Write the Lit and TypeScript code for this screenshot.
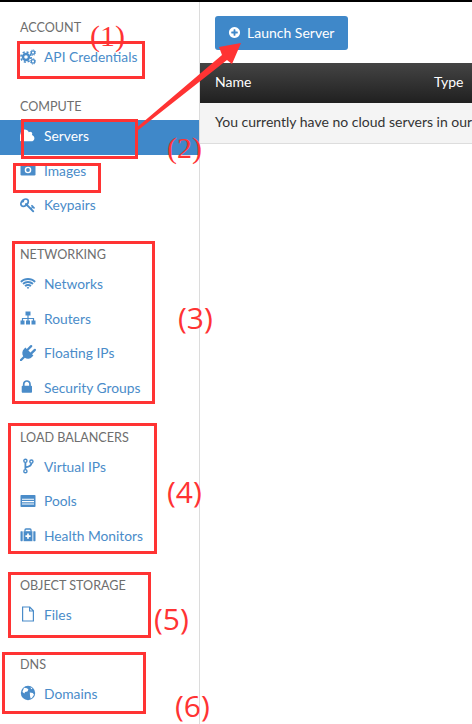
import { LitElement, html, css, svg } from "lit";
import { customElement } from "lit/decorators.js";

const I: Record<string, any> = {
  gears: svg`<svg viewBox="0 0 16 16"><circle cx="6" cy="8" r="3" fill="none" stroke="currentColor" stroke-width="2.400"/><circle cx="6" cy="8" r="5.100" fill="none" stroke="currentColor" stroke-width="1.600" stroke-dasharray="2.100 1.900"/><circle cx="13" cy="3.600" r="1.700" fill="none" stroke="currentColor" stroke-width="1.300"/><circle cx="13" cy="3.600" r="2.700" fill="none" stroke="currentColor" stroke-width="1" stroke-dasharray="1.100 1.020"/><circle cx="13" cy="12.400" r="1.700" fill="none" stroke="currentColor" stroke-width="1.300"/><circle cx="13" cy="12.400" r="2.700" fill="none" stroke="currentColor" stroke-width="1" stroke-dasharray="1.100 1.020"/></svg>`,
  cloud: svg`<svg viewBox="0 0 1920 1792"><path fill="currentColor" d="M1728 1152q0 159-112.5 271.5t-271.5 112.5h-1088q-185 0-316.5-131.5t-131.5-316.5q0-132 71-241.5t187-163.5q-2-28-2-43 0-212 150-362t362-150q158 0 286.5 88t187.5 230q70-62 166-62 106 0 181 75t75 181q0 75-41 138 129 30 213 134.5t84 239.5z"/></svg>`,
  camera: svg`<svg viewBox="0 0 16 16"><rect x="0.500" y="2.500" width="15" height="11" rx="1.200" fill="currentColor"/><circle cx="8" cy="8" r="2.600" fill="none" stroke="#fff" stroke-width="1.400"/></svg>`,
  key: svg`<svg viewBox="0 0 1792 1792"><path fill="currentColor" d="M832 512q0-80-56-136t-136-56-136 56-56 136q0 42 19 83-41-19-83-19-80 0-136 56t-56 136 56 136 136 56 136-56 56-136q0-42-19-83 41 19 83 19 80 0 136-56t56-136zm851 704q0 17-49 66t-66 49q-9 0-28.500-16t-36.500-33-38.500-40-24.500-26l-96 96 220 220q28 28 28 68 0 42-39 81t-81 39q-40 0-68-28l-671-671q-176 131-365 131-163 0-265.500-102.500t-102.500-265.500q0-160 95-313t248-248 313-95q163 0 265.500 102.500t102.500 265.500q0 189-131 365l355 355 96-96q-3-3-26-24.500t-40-38.500-33-36.500-16-28.500q0-17 49-66t66-49q13 0 23 10 6 6 46 44.500t82 79.500 86.500 86 73 78 28.500 41z"/></svg>`,
  wifi: svg`<svg viewBox="0 0 2048 1792"><path fill="currentColor" d="M1024 1523q-20 0-93-73.500t-73-93.500q0-32 62.500-54t103.500-22 103.500 22 62.500 54q0 20-73 93.500t-93 73.500zm270-271q-2 0-40-25t-101.500-50-128.500-25-128.500 25-101 50-40.500 25q-18 0-93.500-75t-75.500-93q0-13 10-23 78-77 196-121t233-44 233 44 196 121q10 10 10 23 0 18-75.500 93t-93.500 75zm273-272q-11 0-23-8-136-105-252-154.500t-268-49.500q-85 0-170.500 22t-149 53-113.500 62-79 53-31 22q-17 0-92-75t-75-93q0-12 10-22 132-132 320-205t380-73 380 73 320 205q10 10 10 22 0 18-75 93t-92 75zm271-271q-11 0-22-9-179-157-371.500-236.500t-420.500-79.500-420.500 79.500-371.500 236.500q-11 9-22 9-17 0-92.500-75t-75.500-93q0-13 10-23 187-186 445-288t527-102 527 102 445 288q10 10 10 23 0 18-75.500 93t-92.500 75z"/></svg>`,
  sitemap: svg`<svg viewBox="0 0 16 16"><rect x="5.500" y="1.500" width="5" height="4" fill="currentColor"/><path d="M8 5v3.500M2.500 11V8.500h11V11M8 8.500V11" fill="none" stroke="currentColor" stroke-width="1.200"/><rect x="0.500" y="10.500" width="4" height="4" fill="currentColor"/><rect x="6" y="10.500" width="4" height="4" fill="currentColor"/><rect x="11.500" y="10.500" width="4" height="4" fill="currentColor"/></svg>`,
  plug: svg`<svg viewBox="0 0 1792 1792"><path fill="currentColor" d="M1755 453q37 38 37 90.500t-37 90.500l-401 400 150 150-160 160q-163 163-389.500 186.500t-411.500-100.500l-362 362h-181v-181l362-362q-124-185-100.500-411.500t186.500-389.500l160-160 150 150 400-401q38-37 91-37t90 37 37 90.500-37 90.500l-400 401 234 234 401-400q38-37 91-37t90 37z"/></svg>`,
  lock: svg`<svg viewBox="0 0 1408 1792"><path fill="currentColor" d="M320 768h512v-192q0-106-75-181t-181-75-181 75-75 181v192zm832 96v576q0 40-28 68t-68 28h-960q-40 0-68-28t-28-68v-576q0-40 28-68t68-28h32v-192q0-184 132-316t316-132 316 132 132 316v192h32q40 0 68 28t28 68z"/></svg>`,
  fork: svg`<svg viewBox="0 0 16 16"><circle cx="5.400" cy="2.800" r="1.600" fill="none" stroke="currentColor" stroke-width="1.400"/><circle cx="5.400" cy="13.200" r="1.600" fill="none" stroke="currentColor" stroke-width="1.400"/><circle cx="11.400" cy="3.600" r="1.600" fill="none" stroke="currentColor" stroke-width="1.400"/><path d="M5.400 4.400v7.200M5.400 9.400c3 -.6 6 -1.600 6 -4.200" fill="none" stroke="currentColor" stroke-width="1.800"/></svg>`,
  list: svg`<svg viewBox="0 0 16 16"><rect x="0.500" y="2" width="15" height="12" rx=".8" fill="currentColor"/><path d="M2 6.200h12M2 8.600h12M2 11h12" stroke="#fff" stroke-width="1.100"/></svg>`,
  medkit: svg`<svg viewBox="0 0 16 16"><path d="M5 4.500V3a1 1 0 0 1 1-1h4a1 1 0 0 1 1 1v1.500" fill="none" stroke="currentColor" stroke-width="1.300"/><rect x="3.600" y="4.200" width="8.800" height="10" fill="currentColor"/><rect x="0.500" y="4.200" width="2.200" height="10" rx=".6" fill="currentColor"/><rect x="13.300" y="4.200" width="2.200" height="10" rx=".6" fill="currentColor"/><path d="M8 6.600v5.200M5.400 9.200h5.200" stroke="#fff" stroke-width="1.700"/></svg>`,
  file: svg`<svg viewBox="0 0 16 16"><path d="M2.600 1h7.200l3.600 3.800V15H2.600zM9.600 1v4h3.800" fill="none" stroke="currentColor" stroke-width="1.200"/></svg>`,
  globe: svg`<svg viewBox="0 0 16 16"><circle cx="8" cy="8" r="7.200" fill="currentColor"/><path d="M4 2.800l3 .4 1.400 1.400-1 1.800-2.400.6-.6 1.600-2-1.600zM9.800 7.400l3 .6 1.200 1.800-2 3-1.400.6-.6-2.600zM10.500 2.200l2 1.200-1.400.8z" fill="#fff"/></svg>`,
  plus: svg`<svg viewBox="0 0 1792 1792"><path fill="currentColor" d="M1344 960v-128q0-26-19-45t-45-19h-256v-256q0-26-19-45t-45-19h-128q-26 0-45 19t-19 45v256h-256q-26 0-45 19t-19 45v128q0 26 19 45t45 19h256v256q0 26 19 45t45 19h128q26 0 45-19t19-45v-256h256q26 0 45-19t19-45zm320-64q0 209-103 385.5t-279.5 279.5-385.5 103-385.5-103-279.5-279.5-103-385.5 103-385.5 279.5-279.5 385.5-103 385.5 103 279.5 279.5 103 385.5z"/></svg>`,
};

const NAV = [
  { title: "ACCOUNT", items: [["gears", "API Credentials"]] },
  { title: "COMPUTE", items: [["cloud", "Servers", true], ["camera", "Images"], ["key", "Keypairs"]] },
  { title: "NETWORKING", items: [["wifi", "Networks"], ["sitemap", "Routers"], ["plug", "Floating IPs"], ["lock", "Security Groups"]] },
  { title: "LOAD BALANCERS", items: [["fork", "Virtual IPs"], ["list", "Pools"], ["medkit", "Health Monitors"]] },
  { title: "OBJECT STORAGE", items: [["file", "Files"]] },
  { title: "DNS", items: [["globe", "Domains"]] },
];

const BOXES = [
  [17, 41, 128, 38], [21, 119, 117, 40], [13, 163, 88, 30], [12, 241, 143, 163],
  [8, 423, 149, 131], [8, 572, 143, 66], [2, 652, 144, 62],
];
const LABELS: [string, number, number, boolean][] = [
  ["(1)", 90, 36, true], ["(2)", 167, 148, true], ["(3)", 178, 318, false],
  ["(4)", 167, 492, false], ["(5)", 154, 619, false], ["(6)", 175, 706, false],
];

@customElement("app-root")
export class AppRoot extends LitElement {
  static styles = css`
    :host { display: block; position: relative; width: 472px; height: 724px; overflow: hidden; background: #fff;
      font-family: Lato, "Open Sans", sans-serif; font-size: 14px; box-sizing: border-box; border-top: 2px solid #000; }
    .page { display: flex; height: 722px; }
    .side { width: 199px; flex: none; border-right: 1px solid #dcdcdc; padding-top: 15px; box-sizing: content-box; }
    .section { margin-bottom: 20.5px; }
    .title { height: 20px; line-height: 22px; margin-bottom: 4px; padding-left: 20px; color: #6e6e6e; font-size: 12.600px; }
    .row { display: flex; align-items: center; height: 34.500px; padding: 0 0 3px 20px; box-sizing: border-box; color: #4a8cc9; font-size: 13.800px; }
    .row svg { width: 16px; height: 16px; display: block; }
    .ico { width: 16px; margin-right: 8px; flex: none; }
    .row.active { background: #3f88c9; color: #fff; }
    .main { flex: 1; min-width: 0; }
    .btnwrap { padding: 14px 15px 13px; }
    .btn { display: inline-flex; align-items: center; height: 34px; width: 133px; box-sizing: border-box; padding: 0 0 1px 13px; gap: 6px;
      background: #3f88c9; color: #fff; border-radius: 3px; font-size: 14px; }
    .btn svg { width: 13px; height: 13px; display: block; }
    .thead { display: flex; height: 40px; align-items: center; padding: 0 0 3px 15px; box-sizing: border-box; color: #fff; font-size: 14px;
      background: linear-gradient(#444, #202020); white-space: nowrap; }
    .thead .name { width: 219px; flex: none; }
    .empty { height: 40px; line-height: 38px; padding-left: 15px; background: #f4f4f4; border-bottom: 1px solid #ddd; color: #333; white-space: nowrap; overflow: hidden; font-size: 14px; }
    .box { position: absolute; border: 3px solid #f33; box-sizing: border-box; }
    .arrow { position: absolute; left: 0; top: -2px; width: 472px; height: 724px; pointer-events: none; }
    .lbl { position: absolute; color: #f33; font-size: 30px; line-height: 36px; transform: translateY(-50%); white-space: nowrap; font-family: "Open Sans", sans-serif; font-weight: 400; }
    .lbl.serif { font-family: "Liberation Serif", serif; font-weight: 400; }
  `;

  render() {
    return html`
      <div class="page">
        <nav class="side">
          ${NAV.map((s) => html`<div class="section">
            <div class="title">${s.title}</div>
            ${s.items.map((it) => html`<div class="row ${it[2] ? "active" : ""}"><span class="ico">${I[it[0] as string]}</span>${it[1]}</div>`)}
          </div>`)}
        </nav>
        <main class="main">
          <div class="btnwrap"><div class="btn">${I.plus}Launch Server</div></div>
          <div class="thead"><span class="name">Name</span><span>Type</span></div>
          <div class="empty">You currently have no cloud servers in our system.</div>
        </main>
      </div>
      ${BOXES.map((b) => html`<div class="box" style="left:${b[0]}px;top:${b[1] - 2}px;width:${b[2]}px;height:${b[3]}px"></div>`)}
      <svg class="arrow" viewBox="0 0 472 724"><polygon fill="#f33" points="135,129 222,55 219,47 241,43 232,64 227,60 137,131"/></svg>
      ${LABELS.map((l) => html`<span class="lbl ${l[3] ? "serif" : ""}" style="left:${l[1]}px;top:${l[2] - 2}px">${l[0]}</span>`)}
    `;
  }
}
